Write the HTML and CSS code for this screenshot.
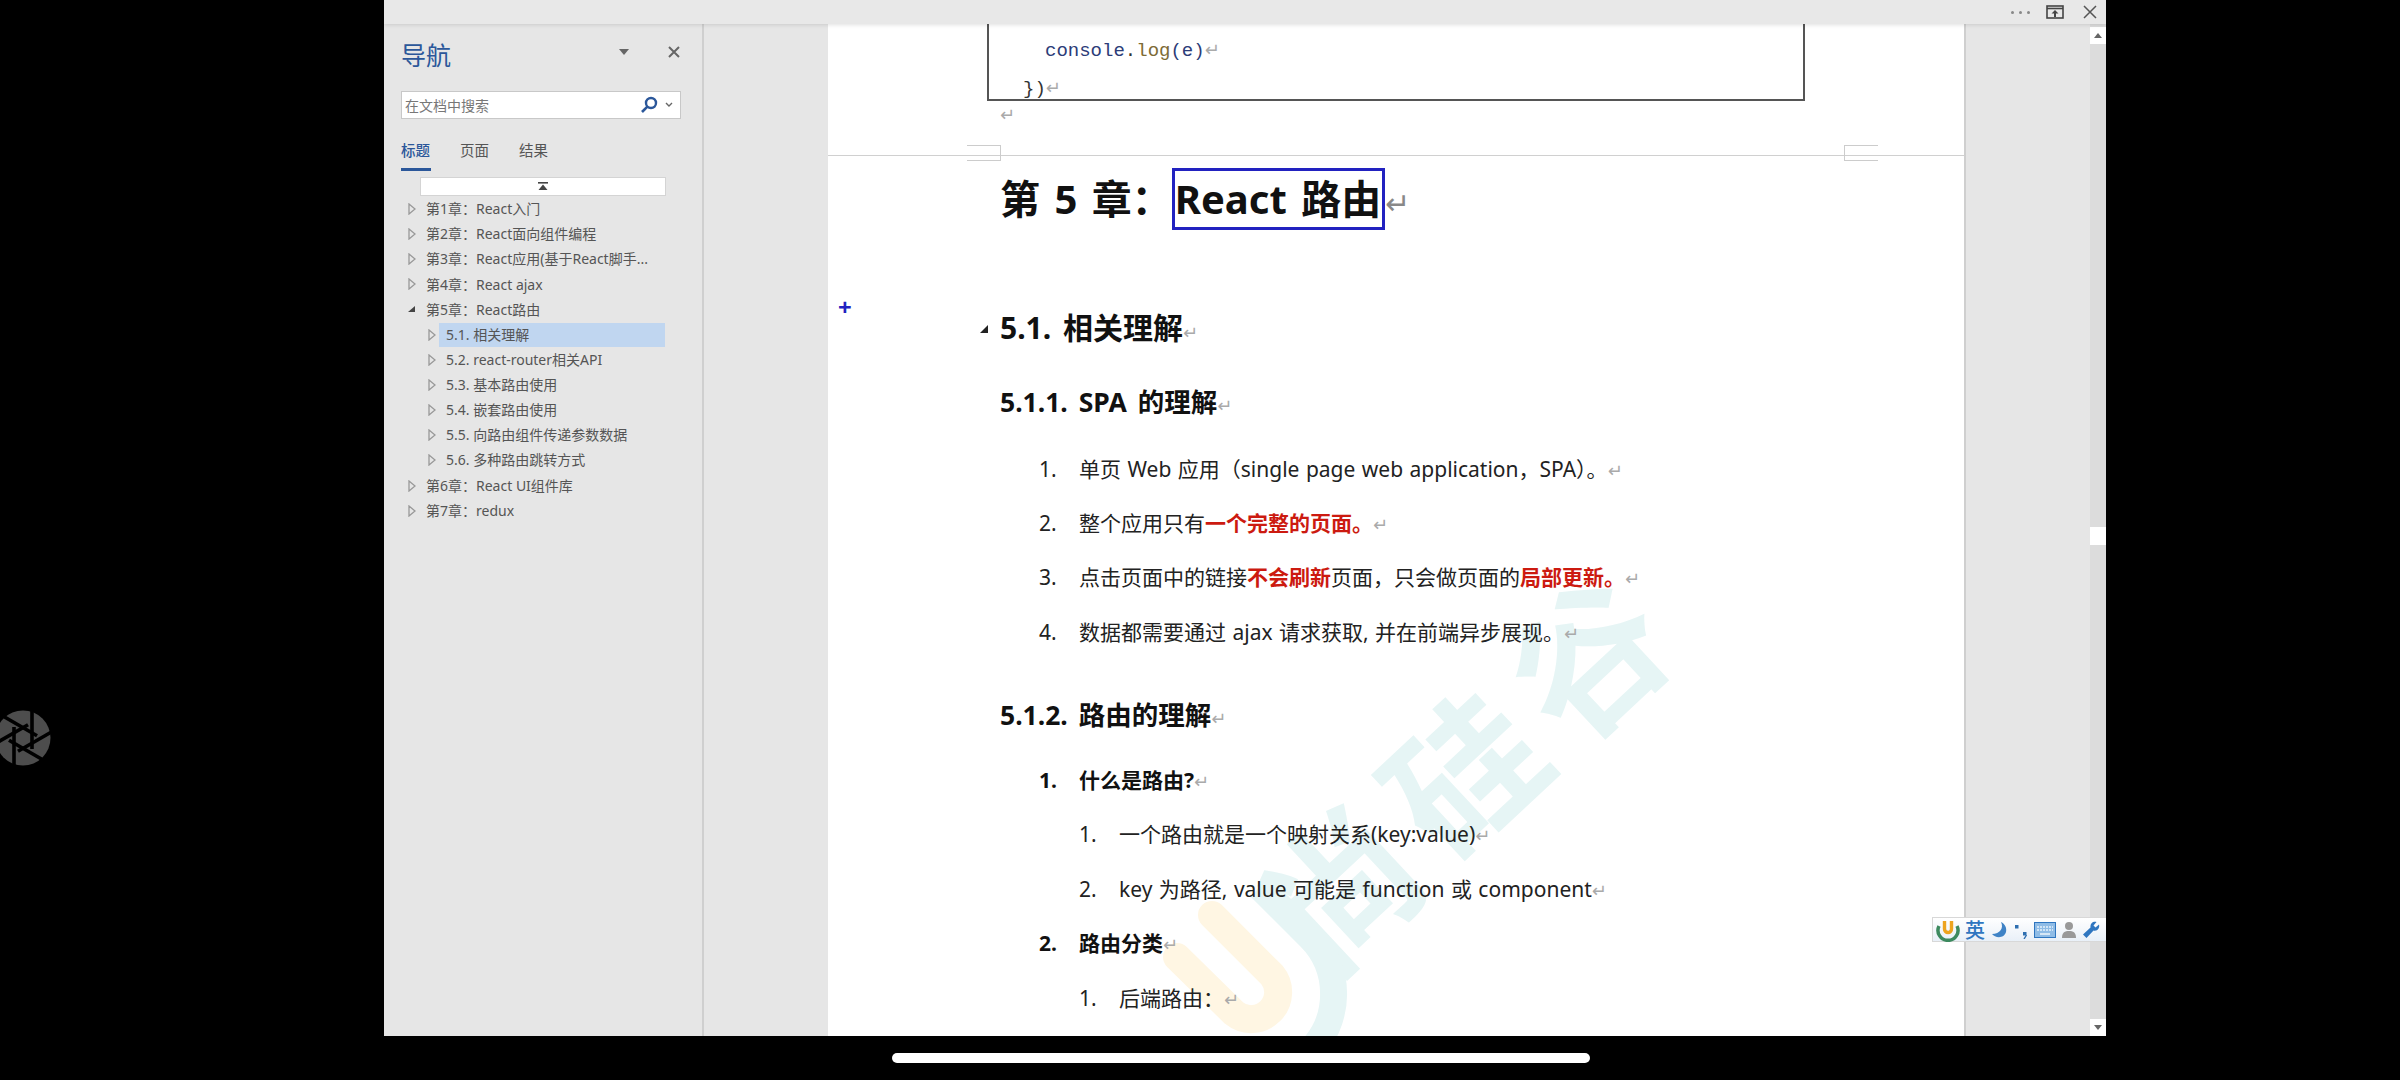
FILE: index.html
```html
<!DOCTYPE html>
<html lang="zh-CN">
<head>
    <meta charset="UTF-8">
    <meta name="viewport" content="width=device-width, initial-scale=1.0">
    <title>React 路由</title>
    <link rel="stylesheet" href="styles.css">
</head>
<body>
    <svg class="defs" width="0" height="0">
        <symbol id="arrowClosed" viewBox="0 0 8 12"><path d="M1 1 L7 6 L1 11 Z" fill="none" stroke="#999" stroke-width="1.3"/></symbol>
        <symbol id="arrowOpen" viewBox="0 0 8 12"><path d="M7 3 L7 9 L0 9 Z" fill="#444"/></symbol>
    </svg>

    <!-- screen recorder button -->
    <svg class="shutter" width="56" height="56" viewBox="-28 -28 56 56">
        <circle r="27.5" fill="#4d4d4d"/>
        <g stroke="#000" stroke-width="3.6">
            <line x1="9" y1="-30" x2="9" y2="11"/>
            <line x1="9" y1="-30" x2="9" y2="11" transform="rotate(60)"/>
            <line x1="9" y1="-30" x2="9" y2="11" transform="rotate(120)"/>
            <line x1="9" y1="-30" x2="9" y2="11" transform="rotate(180)"/>
            <line x1="9" y1="-30" x2="9" y2="11" transform="rotate(240)"/>
            <line x1="9" y1="-30" x2="9" y2="11" transform="rotate(300)"/>
        </g>
    </svg>

    <div class="screen">
        <div class="window">
            <div class="titlebar">
                <span class="dots"><i></i><i></i><i></i></span>
                <svg class="ribbon-btn" width="18" height="14" viewBox="0 0 18 14">
                    <rect x="1" y="1" width="16" height="12" fill="none" stroke="#444" stroke-width="1.6"/>
                    <line x1="1" y1="3.5" x2="17" y2="3.5" stroke="#444" stroke-width="1.6"/>
                    <path d="M9 5 L12.5 8.5 L10 8.5 L10 12 L8 12 L8 8.5 L5.5 8.5 Z" fill="#444"/>
                </svg>
                <svg class="win-close" width="14" height="14" viewBox="0 0 14 14">
                    <path d="M1 1 L13 13 M13 1 L1 13" stroke="#555" stroke-width="1.5"/>
                </svg>
            </div>

            <div class="main">
                <aside class="nav">
                    <div class="nav-head">
                        <span class="nav-title">导航</span>
                        <span class="nav-drop"></span>
                        <svg class="nav-close" width="12" height="12" viewBox="0 0 12 12">
                            <path d="M1 1 L11 11 M11 1 L1 11" stroke="#666" stroke-width="2"/>
                        </svg>
                    </div>
                    <div class="search">
                        <span class="search-text">在文档中搜索</span>
                        <svg width="18" height="18" viewBox="0 0 18 18">
                            <circle cx="11" cy="7" r="5" fill="none" stroke="#2b579a" stroke-width="2.4"/>
                            <line x1="7.4" y1="10.6" x2="2" y2="16" stroke="#2b579a" stroke-width="2.6"/>
                        </svg>
                        <svg class="search-more" width="8" height="6" viewBox="0 0 8 6">
                            <path d="M1 1 L4 4 L7 1" fill="none" stroke="#666" stroke-width="1.4"/>
                        </svg>
                    </div>
                    <div class="tabs">
                        <span class="tab active">标题</span>
                        <span class="tab">页面</span>
                        <span class="tab">结果</span>
                    </div>
                    <div class="jump-top">
                        <svg width="12" height="9" viewBox="0 0 12 9">
                            <rect x="1" y="0" width="10" height="1.6" fill="#444"/>
                            <path d="M6 2.5 L10.5 8 L1.5 8 Z" fill="#444"/>
                        </svg>
                    </div>
                    <ul class="tree">
                        <li><svg class="arrow"><use href="#arrowClosed"/></svg>第1章&#xFF1A;React入门</li>
                        <li><svg class="arrow"><use href="#arrowClosed"/></svg>第2章&#xFF1A;React面向组件编程</li>
                        <li><svg class="arrow"><use href="#arrowClosed"/></svg>第3章&#xFF1A;React应用(基于React脚手...</li>
                        <li><svg class="arrow"><use href="#arrowClosed"/></svg>第4章&#xFF1A;React ajax</li>
                        <li><svg class="arrow"><use href="#arrowOpen"/></svg>第5章&#xFF1A;React路由</li>
                        <li class="sub selected"><svg class="arrow"><use href="#arrowClosed"/></svg><span>5.1. 相关理解</span></li>
                        <li class="sub"><svg class="arrow"><use href="#arrowClosed"/></svg><span>5.2. react-router相关API</span></li>
                        <li class="sub"><svg class="arrow"><use href="#arrowClosed"/></svg><span>5.3. 基本路由使用</span></li>
                        <li class="sub"><svg class="arrow"><use href="#arrowClosed"/></svg><span>5.4. 嵌套路由使用</span></li>
                        <li class="sub"><svg class="arrow"><use href="#arrowClosed"/></svg><span>5.5. 向路由组件传递参数数据</span></li>
                        <li class="sub"><svg class="arrow"><use href="#arrowClosed"/></svg><span>5.6. 多种路由跳转方式</span></li>
                        <li><svg class="arrow"><use href="#arrowClosed"/></svg>第6章&#xFF1A;React UI组件库</li>
                        <li><svg class="arrow"><use href="#arrowClosed"/></svg>第7章&#xFF1A;redux</li>
                    </ul>
                </aside>

                <div class="gutter"></div>

                <div class="paper">
                    <!-- watermark sits behind the text -->
                    <div class="watermark">尚硅谷</div>
                    <svg class="wm-logo" width="240" height="160" viewBox="1140 880 240 160">
                        <path d="M1260 887 L1310 937 A80 80 0 0 1 1196 1051" fill="none" stroke="#e6f5f5" stroke-width="27"/>
                        <path d="M1212 915 L1272 975 A27 27 0 0 1 1234 1013 L1177 957" fill="none" stroke="#fff6e3" stroke-width="28" stroke-linecap="round"/>
                    </svg>

                    <div class="page-end">
                        <div class="codebox">
                            <div class="code code-in"><span class="c-obj">console</span>.<span class="c-fn">log</span><span class="c-obj">(e)</span><span class="ret">↵</span></div>
                            <div class="code">})<span class="ret">↵</span></div>
                        </div>
                        <div class="after-code"><span class="ret">↵</span></div>
                    </div>

                    <div class="page-next">
                        <span class="corner corner-l"></span>
                        <span class="corner corner-r"></span>

                        <h1 class="h1">第 5 章&#xFF1A;<span class="h1-box">React 路由</span><span class="ret ret-lg">↵</span></h1>
                        <h2 class="h2"><span class="outline-tri"></span><span class="plus">+</span>5.1. 相关理解<span class="ret">↵</span></h2>
                        <h3 class="h3 h3-first">5.1.1. SPA 的理解<span class="ret">↵</span></h3>

                        <div class="li first"><span class="num">1.</span><span>单页 Web 应用&#xFF08;single page web application&#xFF0C;SPA&#xFF09;。<span class="ret">↵</span></span></div>
                        <div class="li"><span class="num">2.</span><span>整个应用只有<b class="red">一个完整的页面。</b><span class="ret">↵</span></span></div>
                        <div class="li"><span class="num">3.</span><span>点击页面中的链接<b class="red">不会刷新</b>页面&#xFF0C;只会做页面的<b class="red">局部更新。</b><span class="ret">↵</span></span></div>
                        <div class="li"><span class="num">4.</span><span>数据都需要通过 ajax 请求获取, 并在前端异步展现。<span class="ret">↵</span></span></div>

                        <h3 class="h3 h3-second">5.1.2. 路由的理解<span class="ret">↵</span></h3>

                        <div class="li bold first-b"><span class="num">1.</span><span>什么是路由?<span class="ret">↵</span></span></div>
                        <div class="li deep"><span class="num">1.</span><span>一个路由就是一个映射关系(key:value)<span class="ret">↵</span></span></div>
                        <div class="li deep"><span class="num">2.</span><span>key 为路径, value 可能是 function 或 component<span class="ret">↵</span></span></div>
                        <div class="li bold"><span class="num">2.</span><span>路由分类<span class="ret">↵</span></span></div>
                        <div class="li deep"><span class="num">1.</span><span>后端路由&#xFF1A;<span class="ret">↵</span></span></div>
                    </div>
                </div>

                <div class="gutter gutter-r"></div>

                <div class="scrollbar">
                    <span class="sb-btn"><i class="sb-up"></i></span>
                    <span class="sb-thumb"></span>
                    <span class="sb-btn"><i class="sb-down"></i></span>
                </div>
            </div>

            <!-- floating input method bar -->
            <div class="imebar">
                <svg width="24" height="24" viewBox="0 0 24 24">
                    <path d="M3 8 A10 10 0 1 0 21 8" fill="none" stroke="#3d8a5f" stroke-width="3.5"/>
                    <path d="M8.5 3 L8.5 11 A3.5 3.5 0 0 0 15.5 11 L15.5 3" fill="none" stroke="#eda41f" stroke-width="3.4"/>
                </svg>
                <span class="ime-lang">英</span>
                <svg width="18" height="18" viewBox="0 0 18 18"><path d="M11 1 C14 7 10 13 2 13 C5 17 14 18 16 11 C17 7 15 3 11 1 Z" fill="#3f83c6"/></svg>
                <svg width="16" height="18" viewBox="0 0 16 18">
                    <rect x="2" y="4" width="3.5" height="3.5" fill="#2f6fb0"/>
                    <rect x="10" y="11" width="3.5" height="3.5" fill="#2f6fb0"/>
                    <path d="M13.5 14 L11 18" stroke="#2f6fb0" stroke-width="1.4"/>
                </svg>
                <svg width="22" height="16" viewBox="0 0 22 16">
                    <rect x="0.5" y="0.5" width="21" height="15" fill="#8fbce6" stroke="#2f76c0"/>
                    <path d="M3 5 H19 M3 8 H19" stroke="#e8f2fb" stroke-width="1.6" stroke-dasharray="2 1"/>
                    <path d="M6 12 H16" stroke="#e8f2fb" stroke-width="1.6"/>
                </svg>
                <svg width="16" height="18" viewBox="0 0 16 18">
                    <circle cx="8" cy="5" r="4" fill="#999"/>
                    <path d="M1 17 C1 11 4 10 8 10 C12 10 15 11 15 17 Z" fill="#999"/>
                </svg>
                <svg width="18" height="18" viewBox="0 0 18 18">
                    <path d="M17 3.5 L13.5 6.5 L11.5 4.5 L14.5 1 C11.5 0 8 2 8.5 6.5 L1 13.5 L4.5 17 L11.5 9.5 C15.5 10.5 18 7 17 3.5 Z" fill="#2f76c0"/>
                </svg>
            </div>
        </div>
        <div class="homebar"></div>
    </div>
</body>
</html>
```

FILE: styles.css
```css
* { box-sizing: border-box; }
html, body { margin: 0; padding: 0; }
body {
    background: #000;
    width: 2400px;
    height: 1080px;
    overflow: hidden;
    padding-left: 384px;
    position: relative;
    font-family: "Noto Sans", "Noto Sans CJK SC", sans-serif;
    color: #1a1a1a;
}
.defs { position: absolute; }
.shutter { position: absolute; left: -5px; top: 710px; }

.screen { width: 1722px; }
.homebar {
    width: 698px;
    height: 10px;
    margin: 17px 0 0 508px;
    background: #fff;
    border-radius: 5px;
}

.window {
    position: relative;
    height: 1036px;
    display: flex;
    flex-direction: column;
    overflow: hidden;
    background: #e6e6e6;
}

/* title bar */
.titlebar {
    height: 24px;
    background: #e8e8e8;
    box-shadow: 0 1px 4px rgba(0, 0, 0, 0.12);
    display: flex;
    align-items: center;
    justify-content: flex-end;
    padding-right: 9px;
    position: relative;
    z-index: 3;
}
.dots { display: flex; gap: 5px; margin-right: 16px; }
.dots i { width: 3px; height: 3px; background: #888; border-radius: 50%; }
.ribbon-btn { margin-right: 19px; }

.main { flex: 1; display: flex; min-height: 0; }

/* navigation pane */
.nav {
    width: 320px;
    border-right: 2px solid #cfcfcf;
    padding-left: 17px;
    font-size: 14px;
    color: #555;
}
.nav-head { display: flex; align-items: center; height: 45px; padding-top: 15px; }
.nav-title { font-size: 25px; color: #2b579a; width: 218px; }
.nav-drop {
    width: 0;
    height: 0;
    border-left: 5.5px solid transparent;
    border-right: 5.5px solid transparent;
    border-top: 6px solid #666;
    margin-right: 39px;
    margin-top: -5px;
}
.nav-close { margin-top: -5px; }

.search {
    width: 280px;
    height: 28px;
    margin-top: 22px;
    background: #fff;
    border: 1px solid #c8c8c8;
    display: flex;
    align-items: center;
    padding: 0 7px 0 3px;
    color: #777;
}
.search-text { flex: 1; }
.search-more { margin-left: 7px; }

.tabs { display: flex; gap: 29px; margin-top: 19px; font-size: 14.5px; }
.tab { height: 33px; line-height: 24px; width: 30px; white-space: nowrap; }
.tab.active { color: #2b579a; font-weight: 500; border-bottom: 3px solid #2b579a; }

.jump-top {
    width: 246px;
    height: 19px;
    margin: 6px 0 0 19px;
    background: #fff;
    border: 1px solid #d4d4d4;
    display: flex;
    align-items: center;
    justify-content: center;
}

.tree { list-style: none; margin: 0; padding: 0 0 0 7px; }
.tree li {
    height: 25.2px;
    line-height: 25px;
    display: flex;
    align-items: center;
    white-space: nowrap;
}
.tree .arrow { width: 8px; height: 12px; margin-right: 10px; flex: none; }
.tree .sub { padding-left: 20px; }
.tree .sub span { width: 226px; height: 24px; line-height: 24px; padding-left: 7px; margin-left: -7px; }
.tree .selected span { background: #c0d6f0; }

.gutter { width: 124px; flex: none; }
.gutter-r { flex: 1; border-left: 2px solid #cfcfcf; }

/* document */
.paper {
    width: 1136px;
    flex: none;
    background: #fff;
    position: relative;
    overflow: hidden;
}
.watermark {
    position: absolute;
    left: 390px;
    top: 668px;
    font-size: 150px;
    line-height: 1;
    font-weight: 700;
    color: #e6f5f5;
    white-space: nowrap;
    transform: rotate(-43deg);
    letter-spacing: 19px;
}
.wm-logo { position: absolute; left: 312px; top: 856px; }

.page-end { height: 132px; border-bottom: 1px solid #d0d0d0; position: relative; }
.codebox {
    width: 818px;
    height: 77px;
    margin-left: 159px;
    border: 2px solid #555;
    border-top: 0;
    background: #fff;
    padding: 7px 0 0 34px;
}
.code { font-family: "Liberation Mono", monospace; font-size: 19px; line-height: 38px; height: 38px; color: #333; }
.code-in { padding-left: 22px; }
.c-obj { color: #2c3c78; }
.c-fn { color: #7d6b35; }
.after-code { margin-left: 172px; height: 28px; line-height: 28px; }

.ret {
    font-family: "DejaVu Sans", sans-serif;
    font-weight: 400;
    font-size: 18px;
    color: #aaa;
}
.ret-lg { font-size: 30px; color: #888; }

.page-next { position: relative; padding: 12px 0 0 172px; }
.corner { position: absolute; top: -11px; width: 34px; height: 16px; border: 1px solid #ccc; }
.corner-l { left: 139px; border-left: 0; }
.corner-r { left: 1016px; border-right: 0; }

.h1, .h2, .h3 { margin: 0; font-weight: 700; white-space: nowrap; color: #111; word-spacing: 4px; }
.h1 { font-size: 40px; height: 62px; line-height: 62px; }
.h1-box { display: inline-block; height: 62px; border: 3px solid #2222c0; padding: 0 1px 0 0; line-height: 56px; }
.h2 { font-size: 30px; height: 40px; line-height: 40px; margin-top: 78px; position: relative; }
.outline-tri {
    position: absolute;
    left: -20px;
    top: 17px;
    border-left: 8px solid transparent;
    border-bottom: 8px solid #222;
}
.plus {
    position: absolute;
    left: -162px;
    top: -21px;
    color: #2222c0;
    font-size: 24px;
    font-weight: 700;
    line-height: 40px;
}
.h3 { font-size: 26.5px; height: 36px; line-height: 36px; }
.h3-first { margin-top: 36px; }
.h3-second { margin-top: 38px; }

.li {
    display: flex;
    font-size: 21px;
    height: 54.4px;
    line-height: 32px;
    padding: 11px 0 0 39px;
    white-space: nowrap;
    color: #222;
    word-spacing: 1px;
}
.li .num { width: 40px; flex: none; }
.li.first { margin-top: 21.5px; }
.li.first-b { margin-top: 20px; }
.li.deep { padding-left: 79px; }
.li.bold { font-weight: 700; color: #111; }
.red { color: #cc1a10; font-weight: 700; }

/* scrollbar */
.scrollbar {
    width: 16px;
    flex: none;
    background: #dcdcdc;
    display: flex;
    flex-direction: column;
    justify-content: space-between;
    align-items: center;
    padding-top: 3px;
}
.sb-btn {
    width: 16px;
    height: 17px;
    background: #fff;
    display: flex;
    align-items: center;
    justify-content: center;
}
.sb-up { border-left: 4.5px solid transparent; border-right: 4.5px solid transparent; border-bottom: 5px solid #666; }
.sb-down { border-left: 4.5px solid transparent; border-right: 4.5px solid transparent; border-top: 5px solid #666; }
.sb-thumb { width: 16px; height: 18px; background: #fff; position: absolute; top: 527px; }

/* input method */
.imebar {
    position: absolute;
    left: 1548px;
    top: 917px;
    width: 174px;
    height: 25px;
    background: linear-gradient(#ffffff, #e9f0f8);
    border: 1px solid #d8d8d8;
    border-right: 0;
    display: flex;
    align-items: center;
    justify-content: space-between;
    padding: 0 6px 0 3px;
}
.ime-lang { font-size: 20px; font-weight: 500; color: #2f76c0; }
```
